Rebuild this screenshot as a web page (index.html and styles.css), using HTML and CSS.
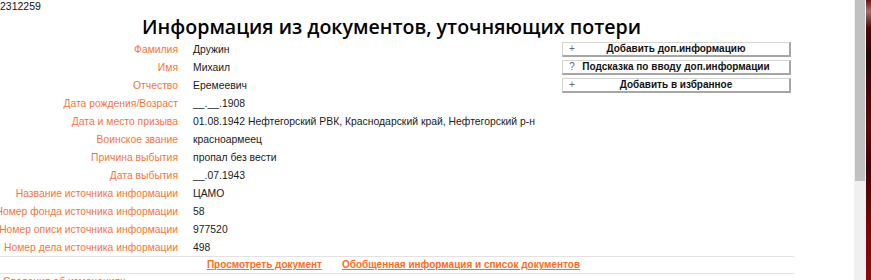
FILE: index.html
```html
<!DOCTYPE html>
<html lang="ru">
<head>
<meta charset="utf-8">
<title>Информация из документов, уточняющих потери</title>
<link rel="stylesheet" href="styles.css">
</head>
<body>
<div class="page">
  <div class="main">
    <div class="content">
      <div class="doc-id">2312259</div>
      <h1 class="title">Информация из документов, уточняющих потери</h1>
      <div class="info">
        <div class="fields">
          <div class="label"><span>Фамилия</span></div><div class="value">Дружин</div>
          <div class="label"><span>Имя</span></div><div class="value">Михаил</div>
          <div class="label"><span>Отчество</span></div><div class="value">Еремеевич</div>
          <div class="label"><span>Дата рождения/Возраст</span></div><div class="value">__.__.1908</div>
          <div class="label"><span>Дата и место призыва</span></div><div class="value">01.08.1942 Нефтегорский РВК, Краснодарский край, Нефтегорский р-н</div>
          <div class="label"><span>Воинское звание</span></div><div class="value">красноармеец</div>
          <div class="label"><span>Причина выбытия</span></div><div class="value">пропал без вести</div>
          <div class="label"><span>Дата выбытия</span></div><div class="value">__.07.1943</div>
          <div class="label"><span>Название источника информации</span></div><div class="value">ЦАМО</div>
          <div class="label"><span>Номер фонда источника информации</span></div><div class="value">58</div>
          <div class="label"><span>Номер описи источника информации</span></div><div class="value">977520</div>
          <div class="label"><span>Номер дела источника информации</span></div><div class="value">498</div>
        </div>
        <div class="actions">
          <div class="btn"><span class="btn-icon">+</span><span class="btn-text">Добавить доп.информацию</span></div>
          <div class="btn"><span class="btn-icon">?</span><span class="btn-text">Подсказка по вводу доп.информации</span></div>
          <div class="btn"><span class="btn-icon">+</span><span class="btn-text">Добавить в избранное</span></div>
        </div>
      </div>
      <div class="links">
        <a href="#" class="link">Просмотреть документ</a>
        <a href="#" class="link">Обобщенная информация и список документов</a>
      </div>
      <div class="more">Сведения об изменениях</div>
    </div>
  </div>
  <div class="scrollbar"><div class="thumb"></div></div>
  <div class="edge"></div>
</div>
</body>
</html>
```

FILE: styles.css
```css
html, body {
  margin: 0;
  padding: 0;
  background: #fff;
}

body {
  font-family: "Liberation Sans", Arial, sans-serif;
  font-size: 10.4px;
  color: #1a1a1a;
}

.page {
  display: flex;
  height: 280px;
  overflow: hidden;
}

.main {
  flex: 1;
  min-width: 0;
}

.content {
  width: 794px;
}

.doc-id {
  font-size: 10.5px;
  line-height: 12px;
  height: 13px;
  color: #111;
}

.title {
  margin: 0;
  height: 28px;
  padding-right: 11px;
  font-family: "Open Sans", sans-serif;
  font-size: 19.6px;
  font-weight: 600;
  line-height: 28px;
  text-align: center;
  color: #000;
}

.info {
  display: flex;
  border-bottom: 1px solid #e2e2e2;
  height: 215px;
}

.fields {
  flex: 1;
  display: grid;
  grid-template-columns: 178px 1fr;
  grid-auto-rows: 18px;
  column-gap: 15px;
  align-content: start;
}

.label {
  display: flex;
  justify-content: flex-end;
  white-space: nowrap;
  font-size: 10.35px;
  line-height: 18px;
  color: #f5733a;
}

.value {
  white-space: nowrap;
  line-height: 18px;
}

.actions {
  width: 229px;
  margin: 1px 3px 0 0;
  display: flex;
  flex-direction: column;
  gap: 3px;
}

.btn {
  display: flex;
  align-items: center;
  height: 12px;
  border: 1px solid #d4d4d4;
  border-right: 2px solid #a6a6a6;
  border-bottom: 2px solid #a6a6a6;
  background: #fff;
  font-weight: bold;
  font-size: 10px;
  line-height: 12px;
  color: #111;
  white-space: nowrap;
}

.btn-icon {
  width: 18px;
  flex: none;
  text-align: center;
  font-weight: normal;
  color: #666;
}

.btn-text {
  flex: 1;
  text-align: center;
  padding-right: 18px;
}

.links {
  display: flex;
  justify-content: center;
  gap: 20px;
  height: 16px;
  padding-right: 7px;
  line-height: 16px;
  border-bottom: 1px solid #e2e2e2;
}

.link {
  font-weight: bold;
  font-size: 10px;
  color: #ff6a1c;
  text-decoration: underline;
}

.more {
  padding-left: 3px;
  padding-top: 1px;
  line-height: 14px;
  color: #f5733a;
}

.scrollbar {
  width: 12px;
  background: #f0f0f0;
  flex: none;
}

.thumb {
  width: 10px;
  margin-left: 1px;
  height: 181px;
  background: #c1c1c1;
}

.edge {
  width: 5px;
  flex: none;
  background: linear-gradient(to bottom, #6a1010 0%, #a07070 4%, #4a0808 10%, #2a0505 20%, #5a0a0a 45%, #3a0404 60%, #7a0606 80%, #8a0a0a 100%);
}
```
